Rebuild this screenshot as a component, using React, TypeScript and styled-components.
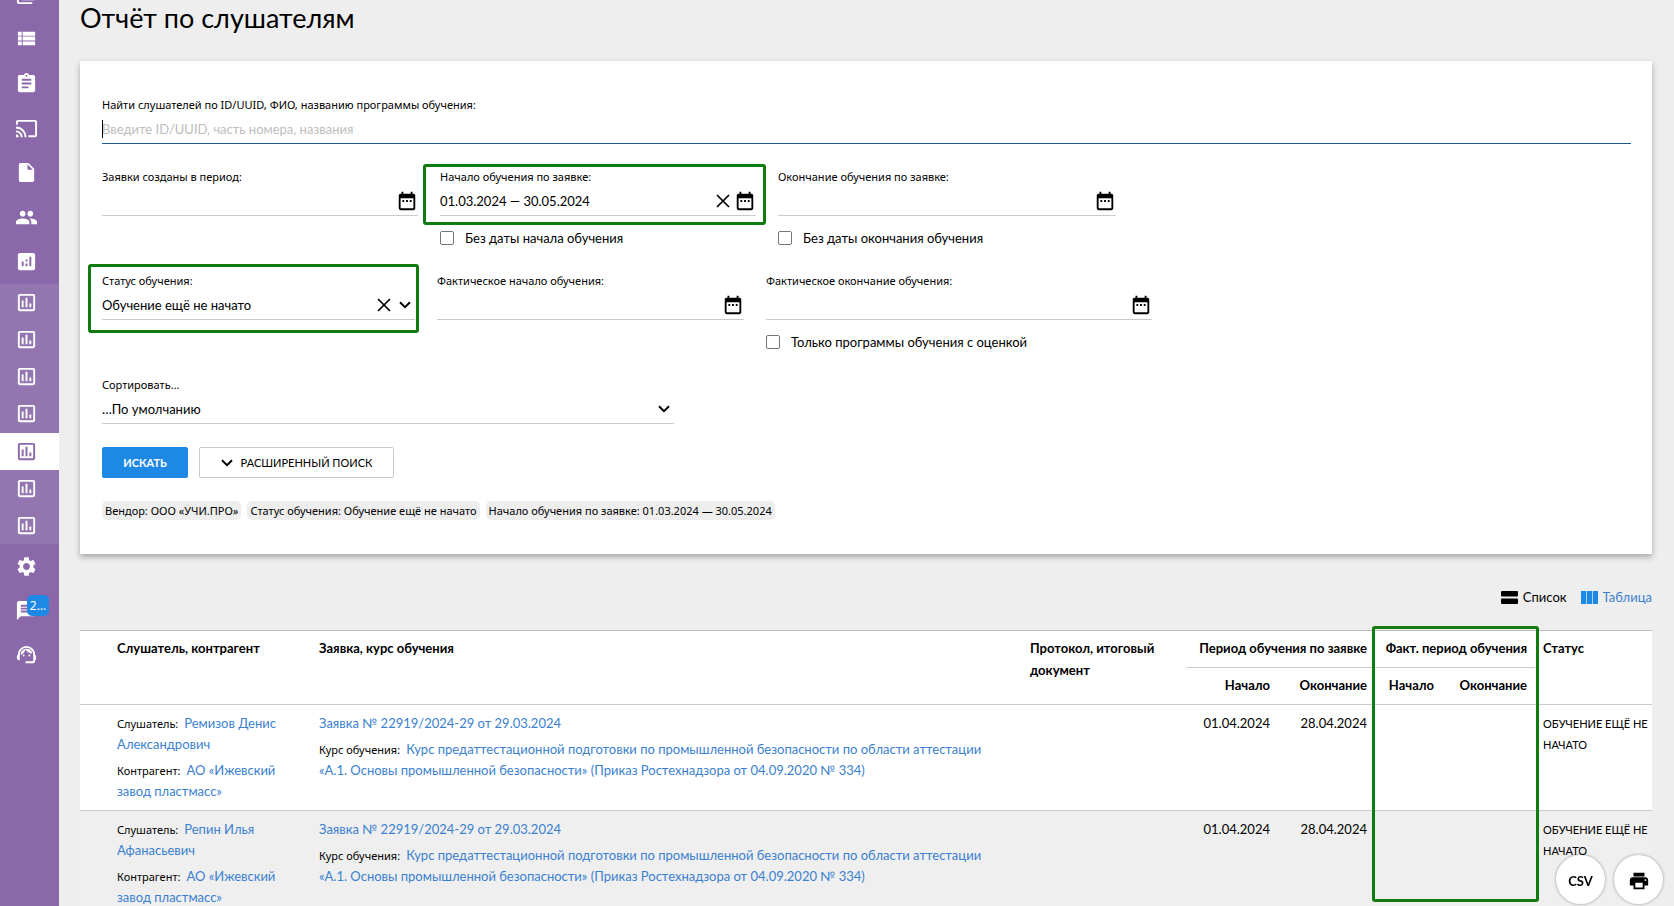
import React, { ReactNode } from "react";
import styled, { createGlobalStyle } from "styled-components";
import {
  MdLibraryBooks,
  MdViewList,
  MdAssignment,
  MdCast,
  MdInsertDriveFile,
  MdPeople,
  MdAnalytics,
  MdOutlineAssessment,
  MdSettings,
  MdMessage,
  MdSupportAgent,
  MdDateRange,
  MdPrint,
} from "react-icons/md";

const ink = "#000";
const link = "#3a7fd0";
const line = "#cacaca";
const accent = "#1e88e5";
const purple = "#8a68aa";
const mark = "#107c10";
const baseFont = 'Lato, "Noto Sans", sans-serif';
const smallFont = '"Noto Sans", "Open Sans", sans-serif';

const GlobalStyle = createGlobalStyle`
  *, *::before, *::after { box-sizing: border-box; }
  body { margin: 0; background: #eee; color: ${ink}; font: 13px/22px ${baseFont}; }
  button, input, select { font: inherit; color: inherit; }
  a { color: ${link}; text-decoration: none; }
`;

const Shell = styled.div`
  display: flex;
  height: 100vh;
  overflow: hidden;
`;

/* Side navigation */

const Sidebar = styled.nav`
  flex: 0 0 59px;
  display: flex;
  flex-direction: column;
  overflow: hidden;
  background: ${purple};
  color: #fff;
`;

const NavGroup = styled.div<{ $height: number; $lift?: number }>`
  display: flex;
  flex-direction: column;
  flex: none;
  height: ${(p) => p.$height}px;
  margin-top: ${(p) => -(p.$lift ?? 0)}px;
`;

const SubGroup = styled(NavGroup)`
  background: #9375b0;
`;

const NavItem = styled.a<{ $active?: boolean }>`
  flex: 1;
  display: flex;
  align-items: center;
  padding-left: 15px;
  color: ${(p) => (p.$active ? purple : "#fff")};
  background: ${(p) => (p.$active ? "#fff" : "transparent")};
`;

const IconHolder = styled.span`
  position: relative;
  display: flex;
`;

const Badge = styled.span`
  position: absolute;
  left: 12px;
  top: -4px;
  width: 22px;
  height: 21px;
  border-radius: 5px;
  background: ${accent};
  color: #fff;
  font: 12px/21px ${smallFont};
  text-align: center;
`;

/* Page */

const Page = styled.main`
  flex: 1;
  min-width: 0;
  overflow-y: auto;
  scrollbar-width: none;
  padding: 0 22px 0 21px;
`;

const Title = styled.h1`
  margin: 0 0 25px;
  font-size: 27px;
  line-height: 36px;
  font-weight: 400;
`;

const Card = styled.form`
  padding: 34px 21px 34px 22px;
  background: #fff;
  box-shadow: 0 3px 6px rgba(0, 0, 0, 0.3);
`;

const FieldRow = styled.div<{ $columns?: string }>`
  display: grid;
  grid-template-columns: ${(p) => p.$columns ?? "1fr"};
  column-gap: 22px;
  align-items: start;
  margin-bottom: 23px;
`;

const Cell = styled.div`
  position: relative;
  min-width: 0;
`;

const FieldLabel = styled.label`
  display: block;
  font: 11px/20px ${smallFont};
`;

const Control = styled.div<{ $focused?: boolean }>`
  position: relative;
  display: flex;
  align-items: center;
  gap: 4px;
  height: 29px;
  border-bottom: 1px solid ${(p) => (p.$focused ? "#1d5a94" : line)};
`;

const TextInput = styled.input`
  flex: 1;
  min-width: 0;
  height: 28px;
  padding: 0;
  border: 0;
  outline: 0;
  background: transparent;
  &::placeholder { color: #bdbdbd; opacity: 1; }
`;

const Select = styled.select`
  flex: 1;
  min-width: 0;
  height: 28px;
  padding: 0;
  border: 0;
  outline: 0;
  appearance: none;
  background: transparent;
`;

const Caret = styled.span`
  position: absolute;
  left: 0;
  top: 5px;
  width: 1px;
  height: 18px;
  background: ${ink};
`;

const IconButton = styled.button`
  display: flex;
  padding: 0;
  border: 0;
  background: none;
`;

const Arrow = styled.span`
  display: flex;
  padding: 0 4px;
  pointer-events: none;
`;

const Check = styled.label`
  display: flex;
  align-items: center;
  gap: 11px;
  height: 20px;
  margin-top: 12px;
`;

const Checkbox = styled.input`
  appearance: none;
  flex: none;
  width: 14px;
  height: 14px;
  margin: 0;
  border: 1px solid #767676;
  border-radius: 2px;
  background: #fff;
`;

const Outline = styled.div`
  position: absolute;
  border: 3px solid ${mark};
  border-radius: 3px;
  pointer-events: none;
`;

const FieldOutline = styled(Outline)<{ $inset: string }>`
  inset: ${(p) => p.$inset};
`;

const ColumnOutline = styled(Outline)`
  top: -4px;
  right: 113px;
  width: 167px;
  height: 276px;
`;

const Actions = styled.div`
  display: flex;
  gap: 11px;
  margin-bottom: 23px;
`;

const Button = styled.button<{ $primary?: boolean }>`
  display: flex;
  align-items: center;
  justify-content: center;
  gap: 8px;
  height: 31px;
  min-width: ${(p) => (p.$primary ? 86 : 195)}px;
  padding: 0 16px;
  border: 1px solid ${(p) => (p.$primary ? accent : line)};
  border-radius: 2px;
  background: ${(p) => (p.$primary ? accent : "#fff")};
  color: ${(p) => (p.$primary ? "#fff" : ink)};
  font-size: 11px;
  font-weight: ${(p) => (p.$primary ? 700 : 400)};
`;

const Chips = styled.div`
  display: flex;
  gap: 6px;
`;

const Chip = styled.span`
  padding: 0 3px;
  border-radius: 5px;
  background: #eee;
  font: 11px/19px ${smallFont};
`;

/* Results */

const ViewSwitch = styled.div`
  display: flex;
  justify-content: flex-end;
  gap: 14px;
  margin: 32px 0 22px;
`;

const ViewLink = styled.a<{ $current?: boolean }>`
  display: flex;
  align-items: center;
  gap: 5px;
  color: ${(p) => (p.$current ? link : ink)};
`;

const TableHolder = styled.div`
  position: relative;
`;

const Table = styled.table`
  width: 100%;
  table-layout: fixed;
  border-collapse: separate;
  border-spacing: 0;
  border-top: 1px solid #bdbdbd;
  background: #fff;
`;

const Head = styled.th<{ $right?: boolean }>`
  height: 37px;
  padding: 6px 8px 8px;
  border-bottom: 1px solid ${line};
  vertical-align: top;
  text-align: ${(p) => (p.$right ? "right" : "left")};
  font-weight: 700;
  white-space: ${(p) => (p.$right ? "nowrap" : "normal")};
`;

const Row = styled.tr`
  &:nth-child(even) { background: #efefef; }
`;

const Data = styled.td<{ $right?: boolean; $roomy?: boolean }>`
  padding: 8px ${(p) => (p.$roomy ? 24 : 8)}px 8px 8px;
  border-bottom: 1px solid ${line};
  vertical-align: top;
  line-height: 21px;
  text-align: ${(p) => (p.$right ? "right" : "left")};
`;

const Line = styled.p`
  margin: 0 0 5px;
  &:last-child { margin: 0; }
`;

const Tag = styled.span`
  margin-right: 6px;
  font: 11px/12px ${smallFont};
`;

const Status = styled.span`
  font-size: 11px;
  white-space: nowrap;
`;

const Floating = styled.div`
  position: fixed;
  right: 11px;
  bottom: 2px;
  display: flex;
  gap: 9px;
`;

const RoundButton = styled.button`
  display: flex;
  align-items: center;
  justify-content: center;
  width: 49px;
  height: 49px;
  padding: 3px 0 0;
  border: 0;
  border-radius: 50%;
  background: #fff;
  box-shadow: 0 0 3px rgba(0, 0, 0, 0.4);
  font-size: 13px;
  font-weight: 700;
`;

const Chevron = () => (
  <svg width="12" height="8" viewBox="0 0 12 8" fill="none" stroke="currentColor" strokeWidth="2" aria-hidden="true">
    <path d="M1 1.2 6 6.2 11 1.2" />
  </svg>
);

const Cross = () => (
  <svg width="14" height="14" viewBox="0 0 14 14" fill="none" stroke="currentColor" strokeWidth="1.7" aria-hidden="true">
    <path d="M1 1 13 13M13 1 1 13" />
  </svg>
);

const ListIcon = () => (
  <svg width="17" height="13" viewBox="0 0 17 13" fill="currentColor" aria-hidden="true">
    <rect width="17" height="5.5" rx="1" />
    <rect y="7.5" width="17" height="5.5" rx="1" />
  </svg>
);

const ColumnsIcon = () => (
  <svg width="17" height="13" viewBox="0 0 17 13" fill={accent} aria-hidden="true">
    <rect width="5.2" height="13" />
    <rect x="5.9" width="5.2" height="13" />
    <rect x="11.8" width="5.2" height="13" />
  </svg>
);

function DateField({ id, label, value }: { id: string; label: string; value?: string }) {
  return (
    <>
      <FieldLabel htmlFor={id}>{label}</FieldLabel>
      <Control>
        <TextInput id={id} defaultValue={value} />
        {value && (
          <IconButton type="button" aria-label="Очистить">
            <Cross />
          </IconButton>
        )}
        <IconButton type="button" aria-label="Календарь">
          <MdDateRange size={22} />
        </IconButton>
      </Control>
    </>
  );
}

function SelectField({ id, label, value, clearable }: { id: string; label: string; value: string; clearable?: boolean }) {
  return (
    <>
      <FieldLabel htmlFor={id}>{label}</FieldLabel>
      <Control>
        <Select id={id} defaultValue={value}>
          <option>{value}</option>
        </Select>
        {clearable && (
          <IconButton type="button" aria-label="Очистить">
            <Cross />
          </IconButton>
        )}
        <Arrow>
          <Chevron />
        </Arrow>
      </Control>
    </>
  );
}

function CheckField({ children }: { children: ReactNode }) {
  return (
    <Check>
      <Checkbox type="checkbox" />
      {children}
    </Check>
  );
}

const mainNav = [
  { name: "Библиотека", icon: <MdLibraryBooks size={23} /> },
  { name: "Списки", icon: <MdViewList size={23} /> },
  { name: "Заявки", icon: <MdAssignment size={23} /> },
  { name: "Трансляции", icon: <MdCast size={23} /> },
  { name: "Файлы", icon: <MdInsertDriveFile size={23} /> },
  { name: "Люди", icon: <MdPeople size={23} /> },
  { name: "Отчёты", icon: <MdAnalytics size={23} /> },
];

const reports = [1, 2, 3, 4, 5, 6, 7];

const people = ["Ремизов Денис Александрович", "Репин Илья Афанасьевич"];

export default function App() {
  return (
    <Shell>
      <GlobalStyle />
      <Sidebar>
        <NavGroup $height={312} $lift={28}>
          {mainNav.map((item) => (
            <NavItem key={item.name} href="#" aria-label={item.name}>
              {item.icon}
            </NavItem>
          ))}
        </NavGroup>
        <SubGroup $height={260}>
          {reports.map((n) => (
            <NavItem key={n} href="#" $active={n === 5} aria-label={`Отчёт ${n}`}>
              <MdOutlineAssessment size={23} />
            </NavItem>
          ))}
        </SubGroup>
        <NavGroup $height={133}>
          <NavItem href="#" aria-label="Настройки">
            <MdSettings size={23} />
          </NavItem>
          <NavItem href="#" aria-label="Сообщения">
            <IconHolder>
              <MdMessage size={23} />
              <Badge>2…</Badge>
            </IconHolder>
          </NavItem>
          <NavItem href="#" aria-label="Поддержка">
            <MdSupportAgent size={23} />
          </NavItem>
        </NavGroup>
      </Sidebar>

      <Page>
        <Title>Отчёт по слушателям</Title>

        <Card>
          <FieldRow>
            <Cell>
              <FieldLabel htmlFor="query">Найти слушателей по ID/UUID, ФИО, названию программы обучения:</FieldLabel>
              <Control $focused>
                <Caret />
                <TextInput id="query" placeholder="Введите ID/UUID, часть номера, названия" />
              </Control>
            </Cell>
          </FieldRow>

          <FieldRow $columns="316fr 316fr 338fr 493fr">
            <Cell>
              <DateField id="created" label="Заявки созданы в период:" />
            </Cell>
            <Cell>
              <Cell>
                <DateField id="start" label="Начало обучения по заявке:" value="01.03.2024 — 30.05.2024" />
                <FieldOutline $inset="-3px -10px -9px -17px" />
              </Cell>
              <CheckField>Без даты начала обучения</CheckField>
            </Cell>
            <Cell>
              <DateField id="end" label="Окончание обучения по заявке:" />
              <CheckField>Без даты окончания обучения</CheckField>
            </Cell>
          </FieldRow>

          <FieldRow $columns="313fr 307fr 386fr 457fr">
            <Cell>
              <SelectField id="status" label="Статус обучения:" value="Обучение ещё не начато" clearable />
              <FieldOutline $inset="-7px -4px -13px -14px" />
            </Cell>
            <Cell>
              <DateField id="fact-start" label="Фактическое начало обучения:" />
            </Cell>
            <Cell>
              <DateField id="fact-end" label="Фактическое окончание обучения:" />
              <CheckField>Только программы обучения с оценкой</CheckField>
            </Cell>
          </FieldRow>

          <FieldRow $columns="572fr 935fr">
            <Cell>
              <SelectField id="sort" label="Сортировать…" value="…По умолчанию" />
            </Cell>
          </FieldRow>

          <Actions>
            <Button type="button" $primary>
              ИСКАТЬ
            </Button>
            <Button type="button">
              <Chevron />
              РАСШИРЕННЫЙ ПОИСК
            </Button>
          </Actions>

          <Chips>
            <Chip>Вендор: ООО «УЧИ.ПРО»</Chip>
            <Chip>Статус обучения: Обучение ещё не начато</Chip>
            <Chip>Начало обучения по заявке: 01.03.2024 — 30.05.2024</Chip>
          </Chips>
        </Card>

        <ViewSwitch>
          <ViewLink href="#">
            <ListIcon />
            Список
          </ViewLink>
          <ViewLink href="#" $current>
            <ColumnsIcon />
            Таблица
          </ViewLink>
        </ViewSwitch>

        <TableHolder>
          <Table>
            <colgroup>
              <col width="29" />
              <col width="202" />
              <col />
              <col width="164" />
              <col width="92" />
              <col width="97" />
              <col width="67" />
              <col width="93" />
              <col width="117" />
            </colgroup>
            <thead>
              <tr>
                <Head rowSpan={2} />
                <Head rowSpan={2}>Слушатель, контрагент</Head>
                <Head rowSpan={2}>Заявка, курс обучения</Head>
                <Head rowSpan={2}>Протокол, итоговый документ</Head>
                <Head colSpan={2} $right>
                  Период обучения по заявке
                </Head>
                <Head colSpan={2} $right>
                  Факт. период обучения
                </Head>
                <Head rowSpan={2}>Статус</Head>
              </tr>
              <tr>
                <Head $right>Начало</Head>
                <Head $right>Окончание</Head>
                <Head $right>Начало</Head>
                <Head $right>Окончание</Head>
              </tr>
            </thead>
            <tbody>
              {people.map((person) => (
                <Row key={person}>
                  <Data />
                  <Data>
                    <Line>
                      <Tag>Слушатель:</Tag>
                      <a href="#">{person}</a>
                    </Line>
                    <Line>
                      <Tag>Контрагент:</Tag>
                      <a href="#">АО «Ижевский завод пластмасс»</a>
                    </Line>
                  </Data>
                  <Data $roomy>
                    <Line>
                      <a href="#">Заявка № 22919/2024-29 от 29.03.2024</a>
                    </Line>
                    <Line>
                      <Tag>Курс обучения:</Tag>
                      <a href="#">
                        Курс предаттестационной подготовки по промышленной безопасности по области аттестации
                        «А.1.&nbsp;Основы промышленной безопасности» (Приказ Ростехнадзора от 04.09.2020 № 334)
                      </a>
                    </Line>
                  </Data>
                  <Data />
                  <Data $right>01.04.2024</Data>
                  <Data $right>28.04.2024</Data>
                  <Data />
                  <Data />
                  <Data>
                    <Status>
                      ОБУЧЕНИЕ ЕЩЁ НЕ
                      <br />
                      НАЧАТО
                    </Status>
                  </Data>
                </Row>
              ))}
            </tbody>
          </Table>
          <ColumnOutline />
        </TableHolder>
      </Page>

      <Floating>
        <RoundButton type="button">CSV</RoundButton>
        <RoundButton type="button" aria-label="Печать">
          <MdPrint size={22} />
        </RoundButton>
      </Floating>
    </Shell>
  );
}
